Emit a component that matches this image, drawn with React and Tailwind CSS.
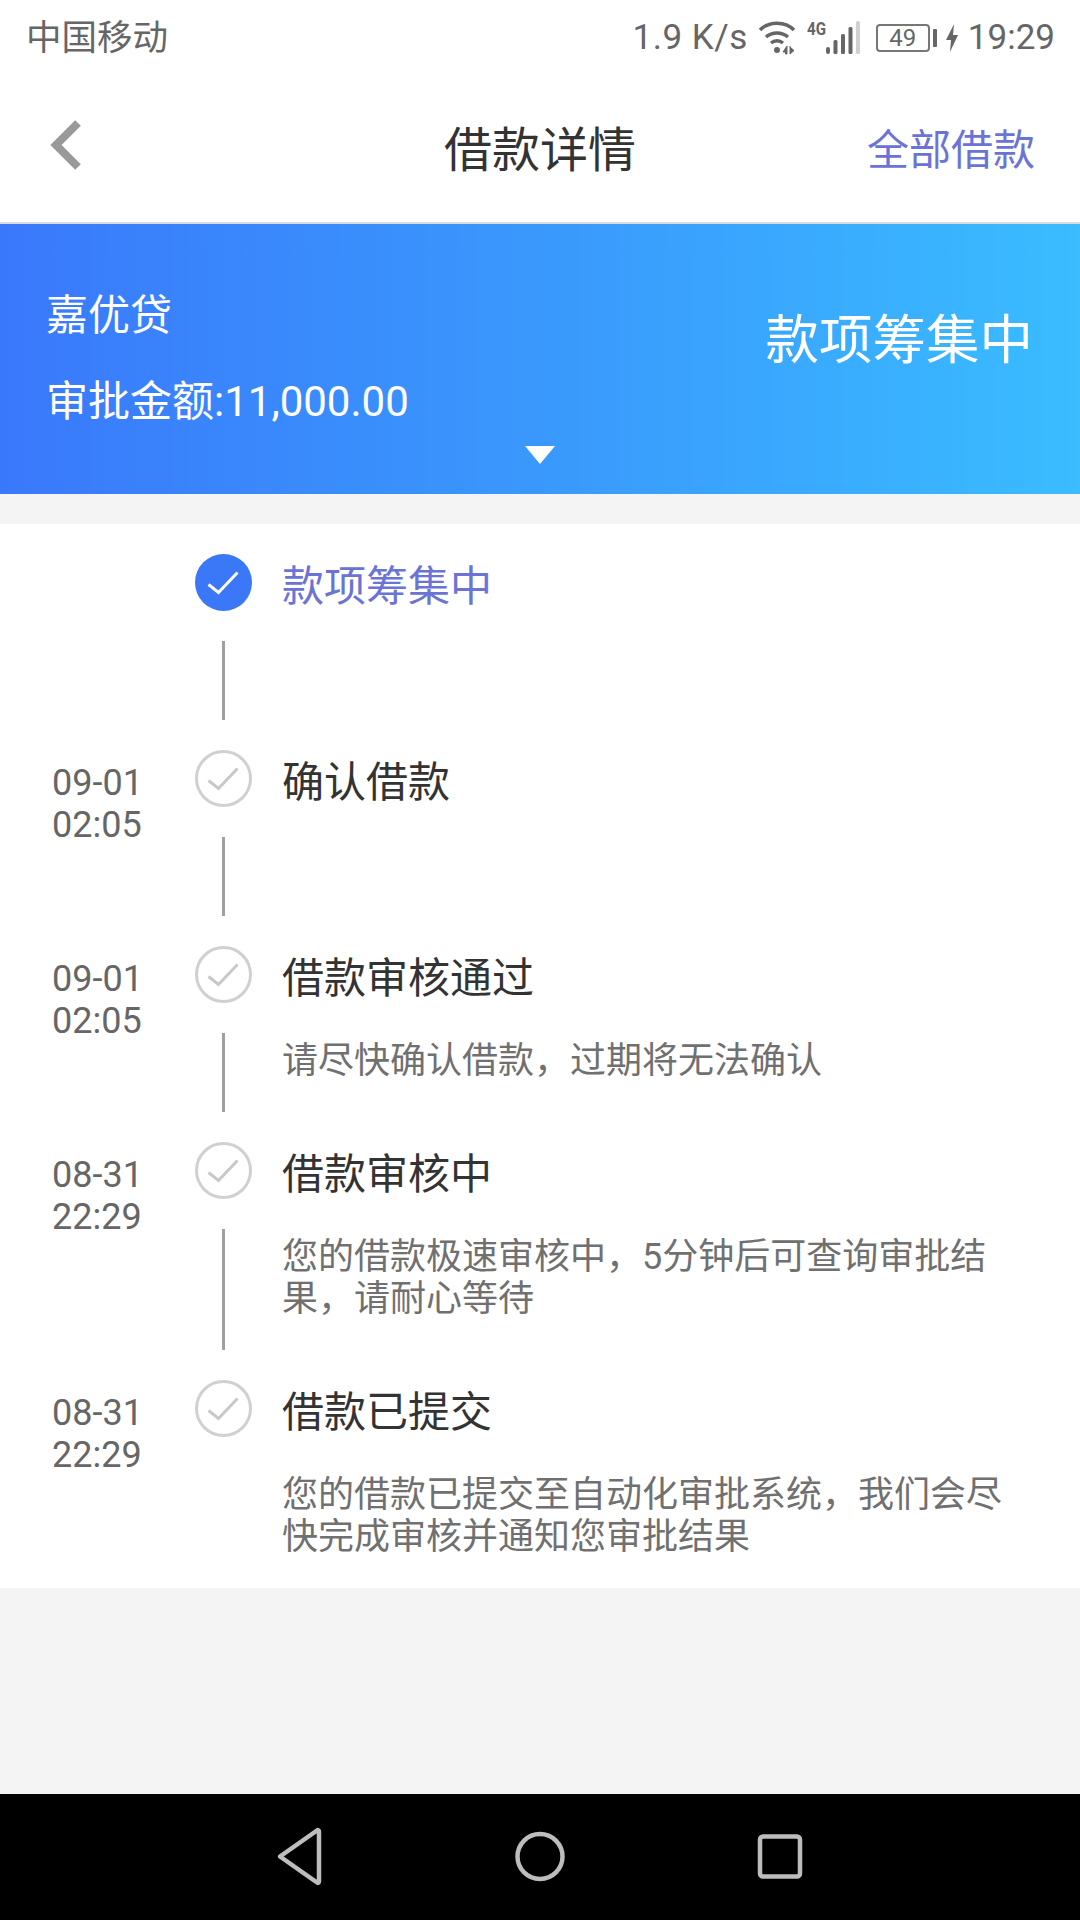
import React from 'react';

const font = { fontFamily: 'Roboto, "Noto Sans CJK SC", sans-serif' };

const steps = [
  { title: '款项筹集中', active: true, h: 'h-[196px]' },
  { date: '09-01', time: '02:05', title: '确认借款', h: 'h-[196px]' },
  { date: '09-01', time: '02:05', title: '借款审核通过', desc: '请尽快确认借款，过期将无法确认', h: 'h-[196px]' },
  { date: '08-31', time: '22:29', title: '借款审核中', desc: '您的借款极速审核中，5分钟后可查询审批结果，请耐心等待', h: 'h-[238px]' },
  { date: '08-31', time: '22:29', title: '借款已提交', desc: '您的借款已提交至自动化审批系统，我们会尽快完成审核并通知您审批结果', h: 'h-[208px]', last: true },
];

const Check = ({ active }) => (
  <svg width="57" height="57" viewBox="0 0 57 57" className="shrink-0">
    <circle cx="28.5" cy="28.5" r={active ? 28.5 : 27} fill={active ? '#3a78f8' : '#fff'} stroke={active ? 'none' : '#d0d0d0'} strokeWidth="3" />
    <path d="M13.500 30.500L23.500 38.500L42.500 18.500" fill="none" stroke={active ? '#fff' : '#c8c8c8'} strokeWidth="3" />
  </svg>
);

const StatusIcons = () => (
  <svg width="104" height="40" viewBox="0 0 104 40" className="shrink-0">
    <path d="M2 12C11 3 27 3 36 12M8 19c6-5.500 16-5.500 22 0M13 25c3.500-3 8.500-3 12 0" fill="none" stroke="#666" strokeWidth="3.500" />
    <circle cx="19" cy="32" r="3" fill="#666" />
    <path d="M25 34l4-6v8h-1.500v-2zM32 28v8M32 29l4 3.500-4 3.500" fill="#666" stroke="#666" strokeWidth="1" />
    <text x="49" y="17" fontSize="18" fontWeight="700" fill="#666" textLength="19" lengthAdjust="spacingAndGlyphs" style={{ fontFamily: 'Roboto, sans-serif' }}>4G</text>
    <rect x="68" y="29" width="4" height="7" rx="2" fill="#666" />
    <rect x="75.500" y="22" width="4" height="14" rx="1.500" fill="#666" />
    <rect x="83" y="16" width="4" height="20" rx="1.500" fill="#666" />
    <rect x="90.500" y="9" width="4" height="27" rx="1.500" fill="#666" />
    <rect x="98" y="3" width="4" height="33" rx="1.500" fill="#d0d0d0" />
  </svg>
);

const App = () => (
  <div className="w-[1080px] h-[1920px] flex flex-col bg-[#f4f4f4] overflow-hidden" style={font}>
    {/* status bar */}
    <div className="h-[76px] bg-white flex items-center justify-between pl-[26px] pr-[25px] text-[#666666]">
      <span className="text-[35.500px] mt-[2px]">中国移动</span>
      <div className="flex items-center">
        <span className="text-[35px] tracking-[0.5px]">1.9 K/s</span>
        <div className="ml-[10px]"><StatusIcons /></div>
        <div className="ml-[14px] w-[54px] h-[28px] border-2 border-[#777] rounded-[4px] flex items-center justify-center text-[24px] leading-none">49</div>
        <div className="ml-[3px] w-[4px] h-[18px] bg-[#666] rounded-[1px]" />
        <svg width="14" height="30" viewBox="0 0 14 30" className="ml-[8px] shrink-0">
          <path d="M9 1L1 17h5l-1 12 8-17H8z" fill="#666" />
        </svg>
        <span className="ml-[9px] text-[35px]">19:29</span>
      </div>
    </div>

    {/* nav bar */}
    <div className="h-[148px] bg-white border-b-2 border-[#d9dde2] relative flex items-center justify-center pb-[2px]">
      <svg width="36" height="54" viewBox="0 0 36 54" className="absolute left-[47px] top-[42px]">
        <path d="M31 5L9 27l22 22" fill="none" stroke="#999" strokeWidth="8" />
      </svg>
      <span className="text-[48px] leading-none text-[#333] mt-[6px]">借款详情</span>
      <span className="absolute right-[45px] top-[54px] text-[42px] leading-none text-[#6b74d6]">全部借款</span>
    </div>

    {/* summary banner */}
    <div className="h-[270px] relative flex items-center justify-between bg-gradient-to-r from-[#3a78fb] via-[#3a98fc] to-[#3abcff] pl-[46px] pr-[47px] text-white">
      <div className="flex flex-col mt-[-2px]">
        <span className="text-[42px] leading-[56px] mt-[2px]">嘉优贷</span>
        <span className="text-[42px] leading-[56px] mt-[30px]">审批金额:11,000.00</span>
      </div>
      <span className="text-[53.500px] leading-none mt-[-36px]">款项筹集中</span>
      <div className="absolute left-[525px] top-[222px] w-0 h-0 border-l-[15px] border-r-[15px] border-t-[18px] border-l-transparent border-r-transparent border-t-white" />
    </div>

    {/* timeline */}
    <div className="mt-[30px] bg-white pt-[30px] flex flex-col">
      {steps.map((s) => (
        <div key={s.title} className={`flex ${s.h}`}>
          <div className="w-[195px] pl-[52px] pt-[12px] text-[36px] leading-[42px] text-[#666]">
            {s.date && <div>{s.date}</div>}
            {s.time && <div>{s.time}</div>}
          </div>
          <div className="w-[57px] flex flex-col items-center">
            <Check active={s.active} />
            {!s.last && <div className="w-[3px] flex-1 bg-[#a0a0a0] mt-[30px] mb-[30px]" />}
          </div>
          <div className="ml-[30px] w-[729px] pt-[4px]">
            <div className={`text-[42px] leading-[58px] ${s.active ? 'text-[#6b74d6]' : 'text-[#333]'}`}>{s.title}</div>
            {s.desc && <div className="mt-[32px] text-[36px] leading-[42px] text-[#707070]">{s.desc}</div>}
          </div>
        </div>
      ))}
    </div>

    <div className="flex-1" />

    {/* android nav */}
    <div className="h-[126px] bg-black flex items-center justify-center">
      <svg width="1080" height="126" viewBox="0 0 1080 126">
        <path d="M280 62.500l37-26c1-1 2 0 2 1v50c0 1-1 2-2 1z" fill="none" stroke="#bdbdbd" strokeWidth="4.500" strokeLinejoin="round" />
        <circle cx="540" cy="62.500" r="22.500" fill="none" stroke="#bdbdbd" strokeWidth="4.500" />
        <rect x="760" y="42.500" width="40" height="40" rx="3" fill="none" stroke="#bdbdbd" strokeWidth="4.500" />
      </svg>
    </div>
  </div>
);

export default App;
